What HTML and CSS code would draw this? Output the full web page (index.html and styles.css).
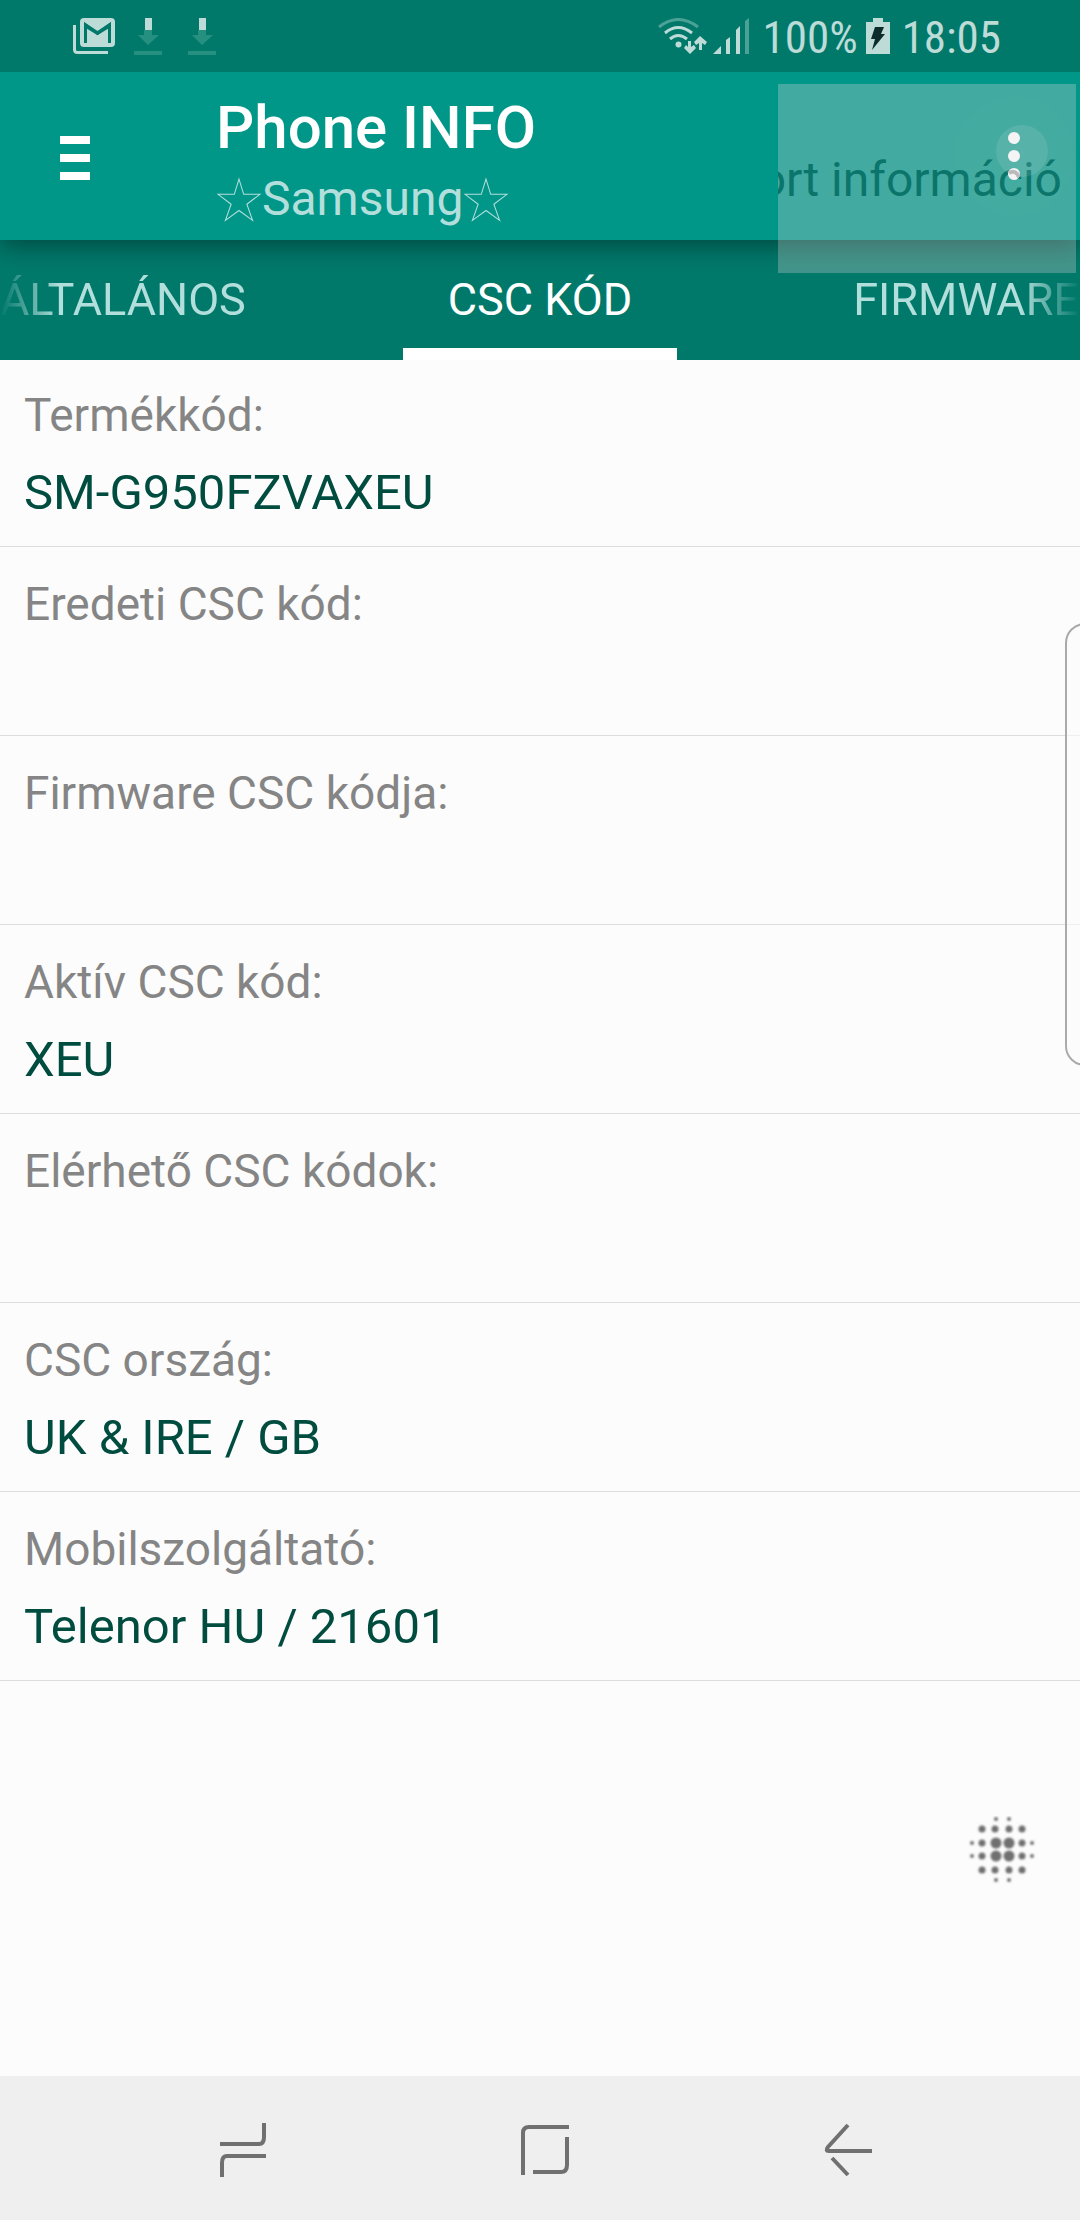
FILE: index.html
```
<!DOCTYPE html>
<html lang="hu">
<head>
  <meta charset="UTF-8" />
  <meta name="viewport" content="width=device-width, initial-scale=1.0"/>
  <title>Phone INFO</title>
  <link rel="stylesheet" href="styles.css">
</head>
<body>

  <div class="status-bar">
    <div class="notifications">
      <svg class="mail-icon" width="42" height="36" viewBox="0 0 42 36">
        <path d="M1.5 7v24.500q0 3 3 3H35" fill="none" stroke="#bddbd7" stroke-width="3"/>
        <rect x="7" y="0" width="35" height="29" rx="4" fill="#bddbd7"/>
        <path d="M12.500 25V7L24.500 15.500L36.500 7V25" fill="none" stroke="#00796b" stroke-width="3"/>
        <path d="M11 4l13.500 9L38 4v5L24.500 17L11 9z" fill="#00796b"/>
      </svg>
      <svg width="28" height="37" viewBox="0 0 28 37">
        <path d="M10 12h8v5h7L14 27L4 17h6zM0 33h28v4H0z" fill="#269080"/>
        <path d="M11 0h7v12h-7z" fill="#bddbd7"/>
      </svg>
      <svg width="28" height="37" viewBox="0 0 28 37">
        <path d="M10 12h8v5h7L14 27L4 17h6zM0 33h28v4H0z" fill="#269080"/>
        <path d="M11 0h7v12h-7z" fill="#bddbd7"/>
      </svg>
    </div>
    <div class="system">
      <svg width="49" height="36" viewBox="0 0 49 36">
        <g fill="none" stroke="#bddbd7" stroke-width="3">
          <path d="M1 9Q20 -6 40 9" stroke="#4ba195"/>
          <path d="M7 15Q20 4 34 15"/>
          <path d="M12 21Q20 14 29 21"/>
        </g>
        <circle cx="20.500" cy="26.500" r="3" fill="#bddbd7"/>
        <path d="M30 23h3v6l3-2l2 3l-6 6l-6-6l2-3l2 2zM41 32v-7l-3 2l-2-3l6-6l7 6l-2 3l-3-2v7z" fill="#bddbd7"/>
      </svg>
      <svg width="36" height="36" viewBox="0 0 36 36">
        <path d="M0 36l8-8v8zM13 36V22l4-3v17zM23 36V12l4-4v28z" fill="#bddbd7"/>
        <path d="M32 36V3l4-3v36z" fill="#4ba195"/>
      </svg>
      <span class="level">100%</span>
      <svg width="24" height="36" viewBox="0 0 24 36">
        <path d="M7 0h10v4h7v32H0V4h7z" fill="#bddbd7"/>
        <path d="M9 9h9l-3 7h4L6 32l3-11H5z" fill="#0d2b2b"/>
      </svg>
      <span class="clock">18:05</span>
    </div>
  </div>

  <header class="app-bar">
    <button class="menu-button" aria-label="Menü">
      <span class="line"></span>
      <span class="line"></span>
      <span class="line"></span>
    </button>
    <div class="titles">
      <h1>Phone INFO</h1>
      <p>
        <svg class="star" viewBox="0 0 42 44"><path d="M21 3L25.500 17.500H41L28.500 27L34 42.500L21 33L8 42.500L13.500 27L1 17.500H16.500Z"/></svg>Samsung<svg class="star" viewBox="0 0 42 44"><path d="M21 3L25.500 17.500H41L28.500 27L34 42.500L21 33L8 42.500L13.500 27L1 17.500H16.500Z"/></svg>
      </p>
    </div>
    <div class="popup-menu">
      <button class="popup-item">Export információ</button>
    </div>
    <button class="more-button" aria-label="További lehetőségek">
      <svg width="120" height="120" viewBox="0 0 120 120">
        <circle cx="60" cy="60" r="60" fill="#fff" opacity="0.01"/>
        <circle cx="68" cy="55" r="26" fill="#fff" opacity="0.1"/>
        <g fill="#f4f4f4">
          <circle cx="60" cy="42" r="6"/>
          <circle cx="60" cy="60" r="6"/>
          <circle cx="60" cy="78" r="6"/>
        </g>
        <path d="M55 77Q61 73 65 81" fill="none" stroke="#bbb" stroke-width="4"/>
      </svg>
    </button>
  </header>

  <nav class="tabs">
    <a class="tab" href="#general">Általános</a>
    <a class="tab active" href="#csc">CSC kód</a>
    <a class="tab next" href="#firmware">Firmware</a>
  </nav>

  <main class="content">
    <dl class="fields">
      <div class="field">
        <dt>Termékkód:</dt>
        <dd>SM-G950FZVAXEU</dd>
      </div>
      <div class="field">
        <dt>Eredeti CSC kód:</dt>
        <dd></dd>
      </div>
      <div class="field">
        <dt>Firmware CSC kódja:</dt>
        <dd></dd>
      </div>
      <div class="field">
        <dt>Aktív CSC kód:</dt>
        <dd>XEU</dd>
      </div>
      <div class="field">
        <dt>Elérhető CSC kódok:</dt>
        <dd></dd>
      </div>
      <div class="field">
        <dt>CSC ország:</dt>
        <dd>UK &amp; IRE / GB</dd>
      </div>
      <div class="field">
        <dt>Mobilszolgáltató:</dt>
        <dd>Telenor HU / 21601</dd>
      </div>
    </dl>
    <div class="edge-handle"></div>
    <button class="floating-button" aria-label="Asszisztens">
      <svg width="68" height="68" viewBox="0 0 68 68">
        <filter id="soft"><feGaussianBlur stdDeviation="1.3"/></filter>
        <g fill="#707070" filter="url(#soft)">
          <circle cx="28" cy="27" r="5.500"/><circle cx="41" cy="27" r="5.500"/>
          <circle cx="28" cy="40" r="5.500"/><circle cx="41" cy="40" r="5.500"/>
          <circle cx="14" cy="13" r="3.500"/><circle cx="27" cy="13" r="3.500"/><circle cx="41" cy="13" r="3.500"/><circle cx="54" cy="13" r="3.500"/>
          <circle cx="14" cy="27" r="3.500"/><circle cx="54" cy="27" r="3.500"/>
          <circle cx="14" cy="40" r="3.500"/><circle cx="54" cy="40" r="3.500"/>
          <circle cx="14" cy="54" r="3.500"/><circle cx="27" cy="54" r="3.500"/><circle cx="41" cy="54" r="3.500"/><circle cx="54" cy="54" r="3.500"/>
          <circle cx="28" cy="3" r="2"/><circle cx="41" cy="3" r="2"/>
          <circle cx="28" cy="64" r="2"/><circle cx="41" cy="64" r="2"/>
          <circle cx="4" cy="27" r="2"/><circle cx="4" cy="40" r="2"/>
          <circle cx="64" cy="27" r="2"/><circle cx="64" cy="40" r="2"/>
        </g>
      </svg>
    </button>
  </main>

  <div class="nav-bar">
    <button class="nav-button" aria-label="Legutóbbiak">
      <svg width="54" height="54" viewBox="0 0 54 54">
        <path d="M4 21H43Q48 21 48 14V0M50 33H11Q6 33 6 40V54"/>
      </svg>
    </button>
    <button class="nav-button" aria-label="Kezdőlap">
      <svg width="54" height="54" viewBox="0 0 54 54">
        <path d="M5 52V10Q5 4 11 4H51M49 14V42Q49 49 43 49H15"/>
      </svg>
    </button>
    <button class="nav-button" aria-label="Vissza">
      <svg width="54" height="54" viewBox="0 0 54 54">
        <path d="M28 2L8 24Q5 28 9 28H52M12 35L28 52"/>
      </svg>
    </button>
  </div>

</body>
</html>
```
FILE: styles.css
```
* {
  margin: 0;
  padding: 0;
  box-sizing: border-box;
}

body {
  font-family: Roboto, "Noto Sans", sans-serif;
  display: flex;
  flex-direction: column;
  min-height: 100vh;
  background: #fcfcfc;
}

button {
  border: none;
  background: none;
  font-family: inherit;
  cursor: pointer;
}

svg {
  display: block;
}

/* status bar */
.status-bar {
  position: relative;
  z-index: 2;
  display: flex;
  justify-content: space-between;
  align-items: center;
  height: 72px;
  padding: 0 79px 0 73px;
  background: #00796b;
  color: #bddbd7;
}

.notifications {
  display: flex;
  gap: 26px;
}

.mail-icon {
  margin-right: -7px;
}

.system {
  display: flex;
  align-items: center;
  gap: 6px;
  font-family: "Roboto Condensed", Roboto, sans-serif;
  font-size: 45px;
}

.level {
  padding: 2px 2px 0 8px;
}

.clock {
  padding: 2px 0 0 6px;
}

/* app bar */
.app-bar {
  position: relative;
  z-index: 1;
  display: flex;
  align-items: center;
  height: 168px;
  padding: 4px 0 0 60px;
  background: #009688;
  box-shadow: 0 6px 24px rgba(0, 0, 0, 0.4);
}

.menu-button {
  display: flex;
  flex-direction: column;
  gap: 10px;
  width: 30px;
  margin-right: 126px;
}

.line {
  height: 8px;
  background: #fff;
}

.titles {
  padding-top: 12px;
}

.titles h1 {
  font-size: 60px;
  font-weight: 500;
  line-height: 70px;
  color: #fff;
}

.titles p {
  display: flex;
  align-items: center;
  font-size: 48px;
  line-height: 72px;
  color: #b2dfdb;
}

.star {
  width: 46px;
  height: 46px;
  fill: none;
  stroke: #b2dfdb;
  stroke-width: 1;
}

.popup-menu {
  position: absolute;
  top: 12px;
  right: 4px;
  display: flex;
  width: 298px;
  height: 189px;
  background: rgba(244, 226, 226, 0.27);
}

.popup-item {
  display: flex;
  flex: 1;
  justify-content: flex-end;
  align-items: center;
  padding: 2px 14px 0 0;
  overflow: hidden;
  white-space: nowrap;
  font-size: 48px;
  color: #0b756b;
}

.more-button {
  position: absolute;
  top: 24px;
  right: 6px;
}

/* tabs */
.tabs {
  display: grid;
  grid-template-columns: minmax(0, 1fr) auto minmax(0, 1fr);
  height: 120px;
  overflow: hidden;
  background: #00796b;
}

.tab {
  line-height: 120px;
  font-size: 45px;
  text-transform: uppercase;
  text-decoration: none;
  white-space: nowrap;
  color: #b2dfdb;
  mask-image: linear-gradient(to right, transparent, #000 60px);
}

.tab.active {
  padding: 0 45px;
  box-shadow: inset 0 -12px #fff;
  color: #fff;
  mask-image: none;
}

.tab.next {
  padding-left: 176px;
  mask-image: linear-gradient(to left, transparent, #000 60px);
}

/* content */
.content {
  position: relative;
  flex: 1;
  overflow: hidden;
}

.field {
  height: 189px;
  padding: 27px 24px 0;
  border-bottom: 1px solid #dcdcdc;
}

.field:first-child {
  height: 187px;
  padding-top: 25px;
}

.field dt {
  font-size: 46px;
  line-height: 60px;
  color: #858585;
}

.field dd {
  margin-top: 16px;
  font-size: 49px;
  line-height: 64px;
  color: #004d40;
}

.edge-handle {
  position: absolute;
  top: 263px;
  right: -25px;
  width: 40px;
  height: 443px;
  border: 2px solid #aaa;
  border-radius: 20px;
  background: rgba(252, 252, 252, 0.6);
}

.floating-button {
  position: absolute;
  right: 44px;
  bottom: 192px;
}

/* navigation bar */
.nav-bar {
  display: grid;
  grid-template-columns: repeat(3, 1fr);
  height: 144px;
  padding: 4px 82px 0 92px;
  background: #efefef;
}

.nav-button {
  display: flex;
  justify-content: center;
  align-items: center;
}

.nav-button svg {
  fill: none;
  stroke: #707070;
  stroke-width: 4;
}
```
